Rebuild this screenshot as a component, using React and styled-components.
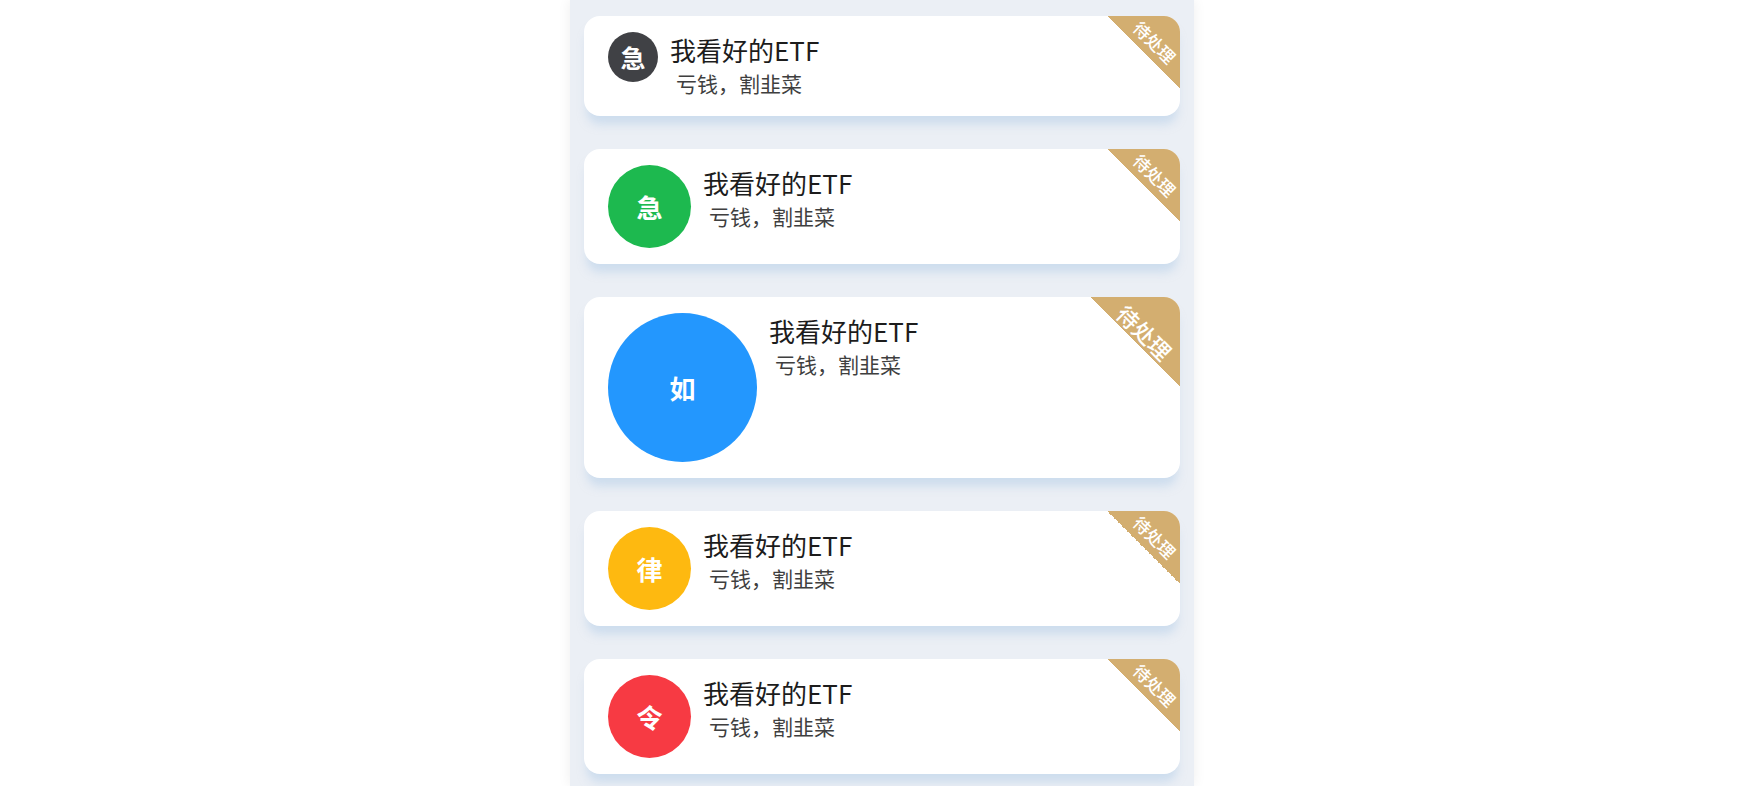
import React from "react";
import styled, { createGlobalStyle } from "styled-components";

const Global = createGlobalStyle`
  html, body { margin: 0; padding: 0; background: #ffffff; overflow: hidden; }
  body { font-family: "Noto Sans CJK SC", "Noto Sans", sans-serif; }
`;

const Page = styled.div`
  display: flex;
  justify-content: center;
  min-height: 100vh;
`;

const Column = styled.main`
  width: 624px;
  min-height: 100vh;
  box-sizing: border-box;
  background: #ebeff5;
  box-shadow: 0 0 12px rgba(0, 0, 0, 0.07);
  padding: 16px 14px 10px;
  display: flex;
  flex-direction: column;
  gap: 33px;
`;

const Card = styled.section`
  position: relative;
  overflow: hidden;
  background: #ffffff;
  border-radius: 16px;
  padding: 16px 24px;
  display: flex;
  align-items: flex-start;
  gap: 12px;
  box-shadow: 0 11px 10px -3px rgba(176, 204, 232, 0.5);
`;

const Avatar = styled.div`
  flex: none;
  width: ${(p) => p.$size}px;
  height: ${(p) => p.$size}px;
  border-radius: 50%;
  background: ${(p) => p.$color};
  color: #ffffff;
  display: flex;
  align-items: center;
  justify-content: center;
  font-size: ${(p) => (p.$size < 60 ? 25 : 26)}px;
  font-weight: 700;
`;

const Texts = styled.div`
  display: flex;
  flex-direction: column;
`;

const Title = styled.div`
  font-size: 26px;
  line-height: 35px;
  color: #1c1c1c;
`;

const Sub = styled.div`
  font-size: 21px;
  line-height: 33px;
  color: #3f3f3f;
  padding-left: 6px;
`;

const Ribbon = styled.div`
  position: absolute;
  top: 0;
  right: 0;
  width: ${(p) => p.$size}px;
  height: ${(p) => p.$size}px;
  background: linear-gradient(to bottom left, #d3ae70 50%, transparent 50%);
`;

const RibbonText = styled.span`
  position: absolute;
  left: ${(p) => p.$size - p.$d}px;
  top: ${(p) => p.$d}px;
  transform: translate(-50%, -50%) rotate(45deg);
  font-size: ${(p) => p.$font}px;
  line-height: 1;
  font-weight: 500;
  color: #ffffff;
  white-space: nowrap;
`;

const items = [
  { ch: "急", color: "#404145", size: 50, big: false },
  { ch: "急", color: "#1db94f", size: 83, big: false },
  { ch: "如", color: "#2397fe", size: 149, big: true },
  { ch: "律", color: "#feb910", size: 83, big: false },
  { ch: "令", color: "#f73a43", size: 83, big: false },
];

function Item({ ch, color, size, big }) {
  const r = big ? { size: 90, d: 35, font: 22 } : { size: 73, d: 25.5, font: 17 };
  return (
    <Card>
      <Avatar $size={size} $color={color}>{ch}</Avatar>
      <Texts>
        <Title>我看好的ETF</Title>
        <Sub>亏钱，割韭菜</Sub>
      </Texts>
      <Ribbon $size={r.size}>
        <RibbonText $size={r.size} $d={r.d} $font={r.font}>待处理</RibbonText>
      </Ribbon>
    </Card>
  );
}

export default function App() {
  return (
    <>
      <Global />
      <Page>
        <Column>
          {items.map((it, i) => (
            <Item key={i} {...it} />
          ))}
        </Column>
      </Page>
    </>
  );
}
